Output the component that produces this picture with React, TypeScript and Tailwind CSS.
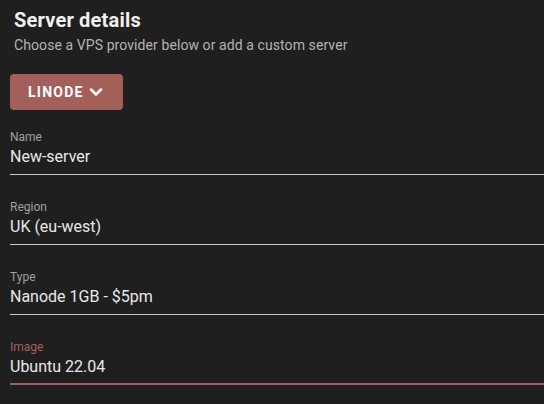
import { ChevronDown } from 'lucide-react';

const fields = [
    { label: 'Name', value: 'New-server' },
    { label: 'Region', value: 'UK (eu-west)' },
    { label: 'Type', value: 'Nanode 1GB - $5pm' },
    { label: 'Image', value: 'Ubuntu 22.04', focused: true },
];

export default function App() {
    return (
        <div className="min-h-screen w-full bg-[#1f1f1f] pl-[10px] pt-[6px] font-['Roboto',sans-serif]">
            <h1 className="ml-[4px] text-[20px] leading-[28px] font-bold tracking-[0.01em] text-[#f0f0f0]">Server details</h1>
            <p className="ml-[4px] mt-[1px] text-[14px] leading-[20px] tracking-[0.006em] text-[#b3b3b3]">
                Choose a VPS provider below or add a custom server
            </p>
            <button className="mt-[19px] flex h-[36px] items-center gap-[2px] rounded-[4px] bg-[#a3605b] pl-[18px] pr-[17px] text-[14px] font-bold tracking-[0.09em] text-white">
                LINODE
                <ChevronDown size={20} strokeWidth={3} />
            </button>
            <div className="mt-[19px] flex flex-col gap-[24px]">
                {fields.map((f) => (
                    <div
                        key={f.label}
                        className={f.focused ? 'border-b-2 border-[#a3605b] pb-[4px]' : 'border-b border-[#c8c8c8] pb-[5px]'}
                    >
                        <div className={`text-[12px] leading-[16px] ${f.focused ? 'text-[#a3605b]' : 'text-[#a0a0a0]'}`}>
                            {f.label}
                        </div>
                        <div className="text-[16px] leading-[24px] text-[#e8e8e8]">{f.value}</div>
                    </div>
                ))}
            </div>
        </div>
    );
}
